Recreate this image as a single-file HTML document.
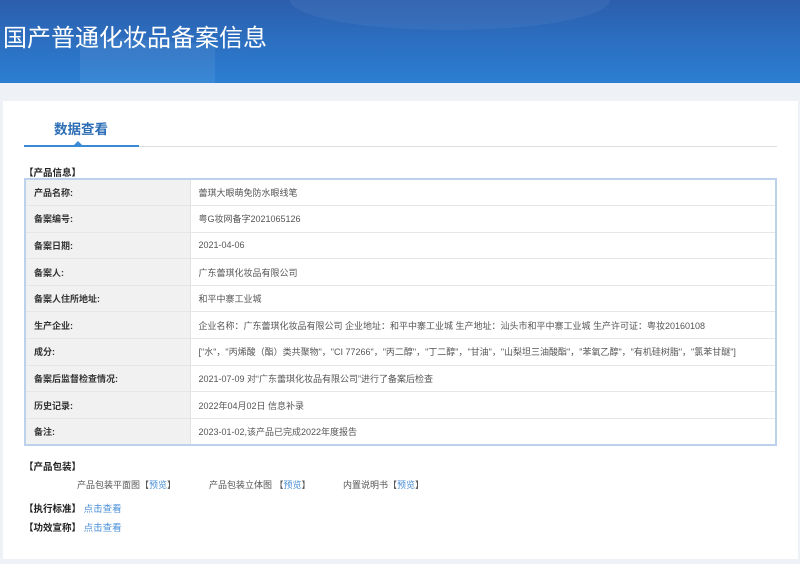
<!DOCTYPE html>
<html><head><meta charset="utf-8"><style>
*{margin:0;padding:0;box-sizing:border-box}
body{width:800px;height:564px;background:#eef2f6;font-family:"Liberation Sans","Noto Sans CJK SC",sans-serif;position:relative;overflow:hidden;color:#333}
.hd{position:absolute;left:0;top:0;width:800px;height:83px;background:linear-gradient(180deg,#2c5ead,#2b7fd3);overflow:hidden}
.hd .g1{position:absolute;left:80px;top:40px;width:135px;height:60px;background:rgba(255,255,255,0.07);transform:skewY(4deg)}
.hd .g2{position:absolute;left:290px;top:-30px;width:320px;height:60px;border-radius:50%;background:rgba(255,255,255,0.05)}
.hd h1{position:absolute;left:3px;top:18px;font-size:24px;font-weight:normal;color:#fff}
.pn{position:absolute;left:3px;top:101px;width:795px;height:458px;background:#fff}
.tab{position:absolute;left:54px;top:118px;font-size:13.5px;font-weight:bold;color:#2c6db5}
.ln{position:absolute;left:24px;top:146px;width:753px;height:1px;background:#ddd}
.lb{position:absolute;left:24px;top:145px;width:115px;height:2px;background:#3b8ad6}
.tri{position:absolute;left:73px;top:141px;width:0;height:0;border-left:5px solid transparent;border-right:5px solid transparent;border-bottom:5px solid #3b8ad6}
.sec{position:absolute;font-size:9.5px;font-weight:bold;color:#222}
table{position:absolute;left:24px;top:178px;width:753px;border-collapse:collapse;border:2px solid #bcd1ec;font-size:9px}
td{height:26.6px;border-bottom:1px solid #e6e6e6;padding-left:8px;color:#555}
td.l{width:165px;background:#f1f1f1;font-weight:bold;color:#333;border-right:1px solid #e2e2e2}
.t{position:absolute;font-size:9px;color:#555}
a{color:#4b8fd8;text-decoration:none}
</style></head><body>
<div class="hd"><div class="g1"></div><div class="g2"></div><h1>国产普通化妆品备案信息</h1></div>
<div class="pn"></div>
<div class="tab">数据查看</div>
<div class="ln"></div><div class="lb"></div><div class="tri"></div>
<div class="sec" style="left:24px;top:165px">【产品信息】</div>
<table>
<tr><td class="l">产品名称:</td><td>蕾琪大眼萌免防水眼线笔</td></tr>
<tr><td class="l">备案编号:</td><td>粤G妆网备字2021065126</td></tr>
<tr><td class="l">备案日期:</td><td>2021-04-06</td></tr>
<tr><td class="l">备案人:</td><td>广东蕾琪化妆品有限公司</td></tr>
<tr><td class="l">备案人住所地址:</td><td>和平中寨工业城</td></tr>
<tr><td class="l">生产企业:</td><td>企业名称：广东蕾琪化妆品有限公司 企业地址：和平中寨工业城 生产地址：汕头市和平中寨工业城 生产许可证：粤妆20160108</td></tr>
<tr><td class="l">成分:</td><td>["水"，"丙烯酸（酯）类共聚物"，"CI 77266"，"丙二醇"，"丁二醇"，"甘油"，"山梨坦三油酸酯"，"苯氧乙醇"，"有机硅树脂"，"氯苯甘醚"]</td></tr>
<tr><td class="l">备案后监督检查情况:</td><td>2021-07-09 对“广东蕾琪化妆品有限公司”进行了备案后检查</td></tr>
<tr><td class="l">历史记录:</td><td>2022年04月02日 信息补录</td></tr>
<tr><td class="l">备注:</td><td>2023-01-02,该产品已完成2022年度报告</td></tr>
</table>
<div class="sec" style="left:24px;top:459px">【产品包装】</div>
<div class="t" style="left:77px;top:478px">产品包装平面图【<a>预览</a>】</div>
<div class="t" style="left:209px;top:478px">产品包装立体图 【<a>预览</a>】</div>
<div class="t" style="left:343px;top:478px">内置说明书【<a>预览</a>】</div>
<div class="sec" style="left:24px;top:501px">【执行标准】 <a style="font-weight:normal">点击查看</a></div>
<div class="sec" style="left:24px;top:520px">【功效宣称】 <a style="font-weight:normal">点击查看</a></div>
</body></html>
